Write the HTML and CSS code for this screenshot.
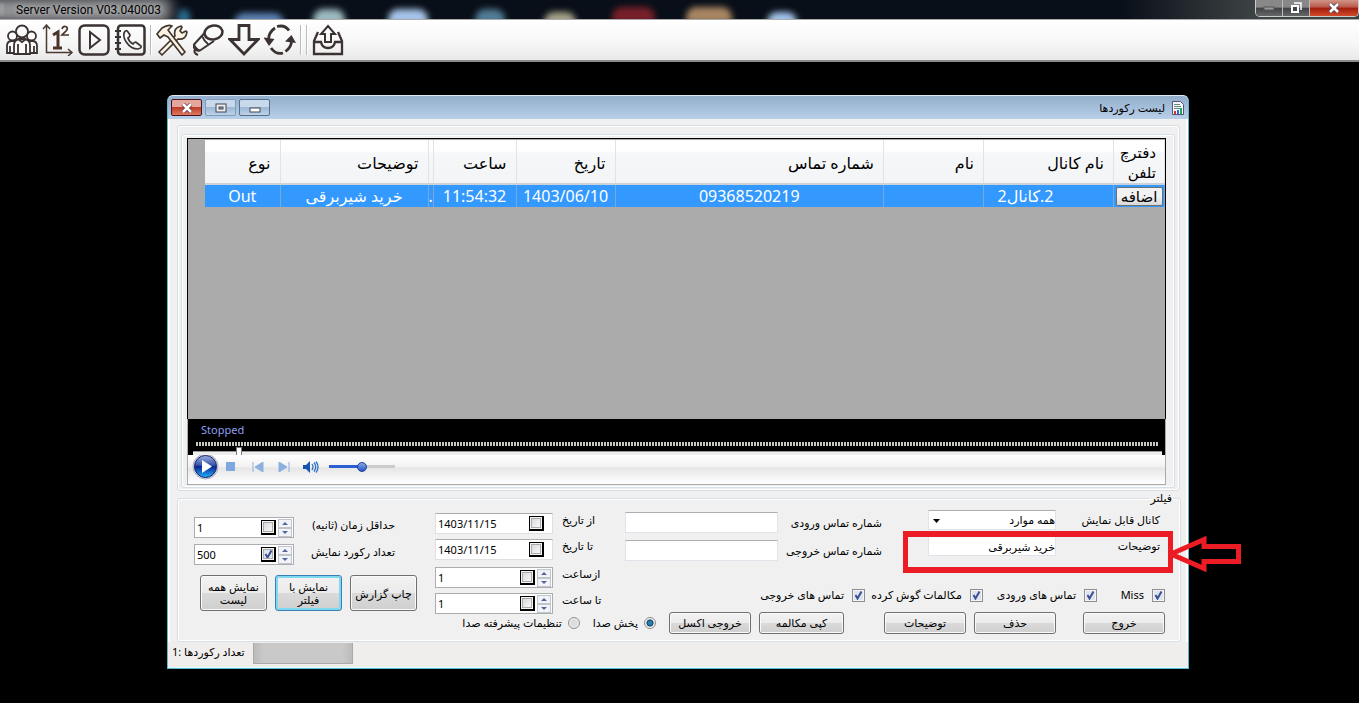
FILE: index.html
```html
<!DOCTYPE html>
<html lang="fa">
<head>
<meta charset="utf-8">
<title>Server Version V03.040003</title>
<link rel="stylesheet" href="styles.css">
</head>
<body>
<header class="appbar">
  <span class="appicon"></span>
  <h1 class="apptitle">Server Version V03.040003</h1>
  <div class="blurs"><i class="b1"></i><i class="b2"></i><i class="b3"></i><i class="b4"></i><i class="b5"></i><i class="b6"></i><i class="b7"></i><i class="b8"></i><i class="b9"></i></div>
  <div class="syscmds">
    <button class="sys" aria-label="Minimize"><svg width="12" height="5"><rect x="1" y="1" width="10" height="3" fill="#999" stroke="#555"/></svg></button>
    <button class="sys" aria-label="Restore"><svg width="12" height="12"><path d="M4 1h7v7" fill="none" stroke="#fff" stroke-width="1.5"/><rect x="2" y="4" width="6" height="6" fill="#444" stroke="#fff" stroke-width="2"/></svg></button>
    <button class="sys sysclose" aria-label="Close"><svg width="12" height="10"><path d="M2 1l8 8M10 1l-8 8" stroke="#445" stroke-width="4"/><path d="M2 1l8 8M10 1l-8 8" stroke="#fff" stroke-width="2.5"/></svg></button>
  </div>
</header>
<nav class="toolbar">
  <button class="tool" aria-label="Users"><svg viewBox="0 0 32 32"><g fill="#fafafa" stroke="#3b3232" stroke-width="1.8"><circle cx="6.500" cy="12" r="4.500"/><circle cx="25.500" cy="12" r="4.500"/><path d="M1 29v-7q0-5 5-5h3v12zM31 29v-7q0-5-5-5h-3v12z"/><path d="M4 22v7M28 22v7"/><path d="M8 30V21q0-5 5-6h6q5 1 5 6v9z"/><circle cx="16" cy="7.500" r="6"/><path d="M12 20v10M20 20v10M12 15l4 3 4-3" fill="none"/></g></svg></button>
  <button class="tool" aria-label="Numbering"><svg viewBox="0 0 32 32"><path d="M4.500 1v27.500H30M1 5l3.500-4L8 5M26 25l4 3.500-4 3.500" fill="none" stroke="#4a3a30" stroke-width="1.500"/><path d="M11 11l5-3v16M11 24h9" fill="none" stroke="#4a3426" stroke-width="3"/><path d="M20 5q1-3 3.500-2.500 3 1 1 4L20 11h7" fill="none" stroke="#4a3426" stroke-width="1.700"/></svg></button>
  <button class="tool" aria-label="Play"><svg viewBox="0 0 32 32"><rect x="1.500" y="1.500" width="29" height="29" rx="5" fill="none" stroke="#3b3232" stroke-width="2.500"/><path d="M12 8l10 8-10 8z" fill="none" stroke="#3b3232" stroke-width="2"/></svg></button>
  <button class="tool" aria-label="Phone book"><svg viewBox="0 0 32 32"><rect x="4" y="1.500" width="26.500" height="29" rx="3" fill="none" stroke="#3b3232" stroke-width="2.500"/><path d="M1 7h6M1 13h6M1 19h6M1 25h6" stroke="#3b3232" stroke-width="2"/><path d="M10 9q2-4 4-1l2 3q0 2-2 3 1 4 5 6 2-3 4-1l4 3q1 2-3 3-7 0-11-6-4-5-3-10z" fill="none" stroke="#3b3232" stroke-width="1.700"/></svg></button>
  <span class="sep"></span>
  <button class="tool" aria-label="Tools"><svg viewBox="0 0 32 32"><g fill="#fdf3e4" stroke="#40362e" stroke-width="1.700" stroke-linejoin="round"><path d="M19 12q-2-8 6-10l1 1-2 4 2 2 4-2 1 1q-1 8-9 7L6 31l-3-3z"/><path d="M1 10l5-6q6-4 10-2l-4 4 3 4 14 18-3 3-14-18-4-2-4 3z"/></g></svg></button>
  <button class="tool" aria-label="Record"><svg viewBox="0 0 32 32"><g fill="none" stroke="#3b3232" stroke-width="2"><path d="M12.500 9L2 20.500q2 5 6 6L22 17M10 12q2 5 6 8M2 20.500v3q2 4 6 3M3 25q-2 4 3 6"/><ellipse cx="21.500" cy="8.500" rx="9" ry="7" transform="rotate(-12 21.500 8.500)" stroke-width="2.500"/></g></svg></button>
  <button class="tool" aria-label="Download"><svg viewBox="0 0 32 32"><path d="M11 1.500h10v14h9L16 30 2 15.500h9z" fill="none" stroke="#3b3232" stroke-width="2.800"/></svg></button>
  <button class="tool" aria-label="Refresh"><svg viewBox="0 0 32 32"><path d="M4.500 15Q5 8 11 4M13 2.500q8-2 12 4M27.500 17q0 6-6 10.500M19 29q-7 2-12-5" fill="none" stroke="#3b3232" stroke-width="2.800"/><path d="M-.5 13.500L10.500 15 5 22zM32 19l-11-1.500L27.500 11z" fill="#3b3232"/></svg></button>
  <span class="sep"></span><span class="sep sep2"></span>
  <button class="tool" aria-label="Export"><svg viewBox="0 0 32 32"><path d="M6 8L2 17v13h28V17L26 8M2 18h7q1 6 7 6t7-6h7" fill="none" stroke="#3b3232" stroke-width="2.300"/><path d="M13 18v-8H9l7-8 7 8h-4v8z" fill="none" stroke="#3b3232" stroke-width="2"/></svg></button>
</nav>
<main class="desktop">
<section class="window">
  <header class="titlebar">
    <button class="wb wclose" aria-label="بستن"><svg width="12" height="10"><path d="M2 1l8 8M10 1l-8 8" stroke="#634" stroke-width="4"/><path d="M2 1l8 8M10 1l-8 8" stroke="#fff" stroke-width="2.500"/></svg></button>
    <button class="wb wmax" aria-label="بزرگ"><svg width="12" height="10"><rect x="1" y="1" width="10" height="8" fill="#eee" stroke="#445" /><rect x="4" y="4" width="4" height="2" fill="#9ab" stroke="#445"/></svg></button>
    <button class="wb" aria-label="کوچک"><svg width="12" height="10"><rect x="1" y="5" width="10" height="4" fill="#fff" stroke="#445"/></svg></button>
    <h2 class="wtitle">لیست رکوردها</h2>
    <svg width="12" height="14"><path d="M.5.500h8l3 3v10H.5z" fill="#f5faff" stroke="#557"/><path d="M2 3.500h6M2 5.500h7M2 7.500h7" stroke="#687"/><path d="M3 10v3" stroke="#c33" stroke-width="2"/><path d="M6 9v4" stroke="#36c" stroke-width="2"/><path d="M9 7v6" stroke="#2a5" stroke-width="2"/></svg>
  </header>
  <div class="content">
    <div class="frame"><div class="frame inner">
      <div class="gridbox">
        <table class="records">
          <colgroup><col class="c-type"><col class="c-desc"><col class="c-dot"><col class="c-time"><col class="c-date"><col><col class="c-name"><col class="c-chan"><col class="c-book"></colgroup>
          <thead><tr><th>نوع</th><th>توضیحات</th><th></th><th>ساعت</th><th>تاریخ</th><th>شماره تماس</th><th>نام</th><th>نام کانال</th><th>دفترچ<br>تلفن</th></tr></thead>
          <tbody><tr><td>Out</td><td>خرید شیربرقی</td><td>.</td><td>11:54:32</td><td>1403/06/10</td><td>09368520219</td><td></td><td class="chan" dir="rtl">2.کانال2</td><td><button class="add">اضافه</button></td></tr></tbody>
        </table>
      </div>
      <div class="player">
        <div class="screen"><span class="state">Stopped</span><div class="ticks"></div><div class="seek"><i class="thumb"></i></div></div>
        <div class="controls">
          <button class="pb" aria-label="Play"><svg width="27" height="27"><defs><linearGradient id="g" x2="0" y2="1"><stop offset="0" stop-color="#9fb2e4"/><stop offset=".45" stop-color="#3450a8"/><stop offset=".5" stop-color="#0b2390"/><stop offset="1" stop-color="#20b4ff"/></linearGradient></defs><circle cx="13.500" cy="13.500" r="12.500" fill="#ddd" stroke="#a8b0c4"/><circle cx="13.500" cy="13.500" r="11" fill="url(#g)" stroke="#17226b"/><path d="M10 7l10 6.500L10 20z" fill="#fff"/></svg></button>
          <button class="pb stop" aria-label="Stop"><svg width="9" height="9"><rect width="9" height="9" fill="#7fa8de"/></svg></button>
          <button class="pb prev" aria-label="Previous"><svg width="12" height="10"><path d="M1 0v10M11 0v10L3 5z" fill="#8cb0df" stroke="#8cb0df"/></svg></button>
          <button class="pb next" aria-label="Next"><svg width="12" height="10"><path d="M11 0v10M1 0v10l8-5z" fill="#8cb0df" stroke="#8cb0df"/></svg></button>
          <button class="pb vol" aria-label="Volume"><svg width="16" height="12"><path d="M0 4h3l4-4v12L3 8H0z" fill="#1556b4"/><path d="M9 3q2 3 0 6M11 1.500q3.500 4.500 0 9M13 .5q4 5.500 0 11" fill="none" stroke="#2b70c8" stroke-width="1.300"/></svg></button>
          <input class="volume" type="range" value="50" aria-label="Volume level">
        </div>
      </div>
    </div></div>
    <fieldset class="filter" dir="rtl">
      <legend>فیلتر</legend>
      <div class="cols" dir="ltr">
        <div class="left">
          <div class="field"><span class="spin"><input id="mn" value="1"><input type="checkbox" class="ck boxed" aria-label="فعال"><span class="ud"><button aria-label="+"></button><button aria-label="-"></button></span></span><label for="mn">حداقل زمان (ثانیه)</label></div>
          <div class="field"><span class="spin"><input id="cn" value="500"><input type="checkbox" class="ck boxed" checked aria-label="فعال"><span class="ud"><button aria-label="+"></button><button aria-label="-"></button></span></span><label for="cn">تعداد رکورد نمایش</label></div>
          <div class="bigs"><button class="btn big">نمایش همه<br>لیست</button><button class="btn big focus">نمایش با<br>فیلتر</button><button class="btn big">چاپ گزارش</button></div>
        </div>
        <div class="right">
          <div class="upper">
            <div class="mid">
              <div class="field"><span class="spin date"><input id="d1" value="1403/11/15"><input type="checkbox" class="ck boxed" aria-label="فعال"></span><label for="d1">از تاریخ</label></div>
              <div class="field"><span class="spin date"><input id="d2" value="1403/11/15"><input type="checkbox" class="ck boxed" aria-label="فعال"></span><label for="d2">تا تاریخ</label></div>
              <div class="field hours"><span class="spin"><input id="h1" value="1"><input type="checkbox" class="ck boxed" aria-label="فعال"><span class="ud"><button aria-label="+"></button><button aria-label="-"></button></span></span><label for="h1">ازساعت</label></div>
              <div class="field"><span class="spin"><input id="h2" value="1"><input type="checkbox" class="ck boxed" aria-label="فعال"><span class="ud"><button aria-label="+"></button><button aria-label="-"></button></span></span><label for="h2">تا ساعت</label></div>
            </div>
            <div class="search">
              <div class="pairs">
                <div class="phones">
                  <div class="prow"><input class="text" id="pi"><label for="pi">شماره تماس ورودی</label></div>
                  <div class="prow"><input class="text" id="po"><label for="po">شماره تماس خروجی</label></div>
                </div>
                <div class="chans">
                  <div class="prow"><select class="text sel" id="ch" dir="rtl"><option>همه موارد</option></select><label for="ch">کانال قابل نمایش</label></div>
                  <div class="prow"><input class="text" id="ds" dir="rtl" value="خرید شیربرقی"><label for="ds">توضیحات</label></div>
                </div>
              </div>
              <div class="checks" dir="rtl">
                <label class="k1"><input type="checkbox" class="ck" checked>Miss</label>
                <label class="k2"><input type="checkbox" class="ck" checked>تماس های ورودی</label>
                <label class="k3"><input type="checkbox" class="ck" checked>مکالمات گوش کرده</label>
                <label><input type="checkbox" class="ck" checked>تماس های خروجی</label>
              </div>
            </div>
          </div>
          <div class="actions" dir="rtl">
            <button class="btn">خروج</button><button class="btn a2">حذف</button><button class="btn a3">توضیحات</button><button class="btn a4">کپی مکالمه</button><button class="btn a3">خروجی اکسل</button>
            <label class="r1"><input type="radio" name="snd" class="rd" checked>پخش صدا</label>
            <label class="r2"><input type="radio" name="snd" class="rd">تنظیمات پیشرفته صدا</label>
          </div>
        </div>
      </div>
    </fieldset>
  </div>
  <footer class="status"><span dir="rtl">تعداد رکوردها :1</span><div class="progress"></div></footer>
  <div class="highlight"></div>
  <svg class="arrow" width="74" height="38"><path d="M3 19L36 4.500V11.500h34.500v15H36V33.500z" fill="none" stroke="#ec1c24" stroke-width="5"/></svg>
</section>
</main>
</body>
</html>
```
FILE: styles.css
```css
* { box-sizing: border-box; }
body { margin: 0; min-height: 100vh; display: flex; flex-direction: column; background: #000; color: #000; font: 11px/14px "Noto Sans", "DejaVu Sans", sans-serif; }
button, input, select { font: inherit; color: inherit; margin: 0; }
button { padding: 0; }
h1, h2 { margin: 0; font-weight: normal; }
.appbar { height: 20px; position: relative; display: flex; align-items: center; overflow: hidden; background: linear-gradient(90deg, transparent 1120px, #3d4244 1255px), #090f18; border-bottom: 1px solid #aaa; }
.appicon { width: 4px; height: 13px; background: linear-gradient(#245, #9cc, #234); margin-right: 12px; z-index: 1; }
.apptitle { z-index: 1; font-family: Roboto, sans-serif; font-size: 12px; line-height: 16px; color: #000; padding-right: 8px; text-shadow: 0 0 5px #ccc; }
.apptitle::before { content: ""; position: absolute; z-index: -1; left: -20px; top: -2px; width: 190px; height: 24px; background: #9b9b9d; filter: blur(7px); }
.blurs i { position: absolute; top: 9px; width: 40px; height: 16px; border-radius: 10px 10px 0 0; filter: blur(3px); background: #a8c8ec; }
.blurs .b1 { left: 178px; width: 12px; background: #2a6b8c; }
.blurs .b2 { left: 234px; width: 50px; background: #5c83b4; top: 13px; }
.blurs .b3 { left: 313px; width: 32px; background: #9cbac0; }
.blurs .b4 { left: 388px; background: #a6c4e8; }
.blurs .b5 { left: 475px; width: 30px; background: #527c96; }
.blurs .b6 { left: 544px; width: 32px; background: #a6a388; top: 12px; }
.blurs .b7 { left: 612px; width: 43px; background: #78202a; top: 7px; }
.blurs .b8 { left: 686px; width: 46px; background: #a98662; top: 7px; }
.blurs .b9 { left: 767px; width: 30px; background: #a4c4ec; top: 12px; }
.syscmds { margin-left: auto; display: flex; align-self: flex-start; height: 17px; border: 1px solid #ccc; border-top: 0; border-radius: 0 0 5px 5px; overflow: hidden; }
.sys { width: 27px; border: 0; border-right: 1px solid #bbb; background: linear-gradient(#888 0 45%, #3e4347 50%, #666); display: grid; place-items: center; }
.sysclose { width: 48px; border: 0; background: linear-gradient(#d09588 0, #b9584a 45%, #a01c0c 50%, #d44a2c); }
.toolbar { height: 42px; display: flex; align-items: center; gap: 4px; padding: 0 6px; background: linear-gradient(#fff, #f6f6f6 60%, #e9e9e9); border-bottom: 2px solid #8b8b8b; }
.tool { width: 32px; height: 32px; border: 0; background: none; }
.tool svg { display: block; width: 32px; height: 32px; }
.sep { width: 2px; height: 30px; border-left: 1px solid #bbb; background: #fff; }
.desktop { flex: 1; padding: 33px 170px 34px 167px; display: flex; }
.window { flex: 1; position: relative; display: flex; flex-direction: column; background: #f0f0f0; border: 1px solid #58b8cf; border-top-color: #dceaf8; border-radius: 6px 6px 0 0; }
.titlebar { height: 23px; display: flex; align-items: center; gap: 3px; padding: 0 4px 0 3px; background: linear-gradient(#93aecb, #b8cfe8); border-radius: 5px 5px 0 0; }
.wb { width: 31px; height: 17px; border: 1px solid #566d8c; border-radius: 2px; display: grid; place-items: center; background: linear-gradient(#c7d9eb 45%, #9db9d5 50%, #bcd2e8); }
.wmax { border-color: #7e9cbd; }
.wclose { border-color: #4a1520; background: linear-gradient(#e5a69c 45%, #c03c25 50%, #dc7c60); }
.wtitle { margin-left: auto; margin-right: 2px; font-size: 11px; }
.titlebar > svg { margin-left: 2px; }
.content { flex: 1; display: flex; flex-direction: column; padding: 6px 5px 0 7px; border: 2px solid #fff; border-width: 0 2px; }
.frame { flex: 1; display: flex; flex-direction: column; border: 1px solid #d5dfe5; border-radius: 3px; box-shadow: inset 0 0 0 1px #fff; padding: 8px 4px 2px 3px; margin-right: 1px; }
.inner { padding: 3px 8px 2px 5px; margin: 0; }
.gridbox { flex: 1; background: #ababab; border: 1px solid #000; border-bottom: 0; padding: 1px 0 0 17px; min-height: 100px; }
.records { width: 100%; table-layout: fixed; border-collapse: collapse; font-size: 16px; line-height: 18px; }
.c-type { width: 75px; } .c-desc { width: 148px; } .c-dot { width: 5px; } .c-time { width: 83px; } .c-date { width: 99px; } .c-name { width: 100px; } .c-chan { width: 130px; } .c-book { width: 51px; }
.records th { height: 44px; padding: 2px 9px 0 0; font-weight: normal; text-align: right; background: linear-gradient(#fff 25%, #f6f7f9 30%, #f3f4f6); border-right: 1px solid #e0e3e8; border-bottom: 2px solid #ccd3d8; overflow: hidden; white-space: nowrap; }
.records th:last-child { padding-right: 8px; padding-top: 0; font-size: 15px; line-height: 20px; }
.records td { height: 23px; padding: 0; text-align: center; color: #fff; background: #3399ff; border-right: 1px solid #7aa8d6; overflow: hidden; white-space: nowrap; }
.records th:nth-child(3), .records td:nth-child(3) { padding: 0; }
.records .chan { padding-right: 46px; }
.add { display: block; width: 47px; height: 19px; margin: 0 auto; overflow: hidden; font-size: 15px; line-height: 16px; color: #000; border: 1px solid #707070; border-radius: 2px; background: linear-gradient(#f2f2f2 50%, #d8d8d8); }
.player { border: 1px solid #aaa; border-top: 0; }
.screen { height: 36px; background: #000; padding: 4px 6px 0 8px; display: flex; flex-direction: column; }
.state { color: #8f9ff2; padding-left: 5px; }
.ticks { height: 4px; margin-top: 5px; background: repeating-linear-gradient(90deg, #c8c8c0 0 2px, #000 2px 3px); }
.seek { height: 4px; margin: 5px -3px 0; background: #eee; border-top: 1px solid #999; position: relative; }
.thumb { position: absolute; left: 43px; top: -5px; width: 6px; height: 8px; background: #fff; border: 1px solid #777; border-bottom: 0; }
.controls { height: 29px; display: flex; align-items: center; padding: 0 4px 6px; background: linear-gradient(#fff, #f2f2f2 40%, #e6e6e6 45%, #fff); }
.pb { border: 0; background: none; display: grid; place-items: center; }
.stop { margin-left: 7px; } .prev { margin-left: 17px; } .next { margin-left: 14px; } .vol { margin-left: 13px; }
.volume { appearance: none; width: 66px; height: 12px; margin-left: 10px; background: linear-gradient(90deg, #2b5ed0 50%, #ccc 50%) center / 100% 3px no-repeat; }
.volume::-webkit-slider-thumb { appearance: none; width: 10px; height: 10px; border-radius: 5px; border: 1px solid #1c3f9a; background: linear-gradient(#8ba6e0, #2458c8); }
.filter { margin: 0; padding: 4px 15px 7px 16px; border: 1px solid #d5dfe5; border-radius: 3px; box-shadow: inset 0 0 0 1px #fff; min-width: 0; }
.filter legend { padding: 0 1px; margin-right: -8px; height: 14px; }
.cols { display: flex; gap: 20px; }
.left { width: 221px; display: flex; flex-direction: column; gap: 6px; padding-top: 8px; }
.field { display: flex; align-items: flex-start; }
.hours { margin-top: 2px; }
.left .field { justify-content: space-between; padding-right: 20px; }
.left .field label { padding-top: 1px; }
.spin { width: 100px; height: 21px; display: flex; align-items: center; background: #fff; border: 1px solid #abadb3; padding: 0 1px 0 2px; flex: none; }
.spin input:first-child { flex: 1; min-width: 0; border: 0; background: none; padding: 0; outline: 0; }
.ck { appearance: none; flex: none; width: 13px; height: 13px; background: linear-gradient(135deg, #d0d2d8, #fff); border: 1px solid #8e8f8f; box-shadow: inset 0 0 0 1px #f4f4f4; }
.ck:checked { background: url("data:image/svg+xml,%3Csvg xmlns='http://www.w3.org/2000/svg' viewBox='0 0 11 11'%3E%3Cpath d='M2.5 5l2 3.500L8.500 1.500' fill='none' stroke='%233a4f94' stroke-width='2'/%3E%3C/svg%3E") center / 11px no-repeat, #dfe3ee; }
.boxed { width: 15px; height: 15px; border: 1px solid #000; border-width: 1px 2px 2px 1px; box-shadow: inset 0 0 0 1px #f4f4f4, inset 0 0 0 2px #aaa; }
.ud { display: flex; flex-direction: column; margin-left: 2px; width: 14px; }
.ud button { height: 9px; border: 1px solid #c0c4cc; background: #f2f3f6; display: grid; place-items: center; }
.ud button::before { content: ""; border: 3px solid transparent; border-top: 0; border-bottom: 3px solid #5565a0; }
.ud button:last-child::before { border-bottom: 0; border-top: 3px solid #5565a0; }
.bigs { display: flex; gap: 8px; margin: 4px 0 0 6px; }
.btn { height: 22px; width: 82px; border: 1px solid #707070; border-radius: 3px; background: linear-gradient(#f2f2f2 0, #ebebeb 49%, #dadada 51%, #cfcfcf); box-shadow: inset 0 0 0 1px #fafafa; white-space: nowrap; }
.big { width: 67px; height: 36px; line-height: 13px; flex: none; }
.focus { border-color: #3c7fb1; box-shadow: inset 0 0 0 2px #7fd8f2; }
.right { flex: 1; min-width: 0; display: flex; flex-direction: column; }
.upper { display: flex; }
.mid { width: 190px; display: flex; flex-direction: column; gap: 5px; padding-top: 4px; }
.mid .spin { width: 118px; margin-right: 9px; }
.mid .date { padding-right: 8px; border-color: #e0e0e0; border-top-color: #abadb3; }
.search { flex: 1; display: flex; flex-direction: column; justify-content: space-between; }
.pairs { display: flex; justify-content: space-between; }
.phones { width: 257px; display: flex; flex-direction: column; gap: 7px; padding-top: 3px; }
.chans { width: 232px; display: flex; flex-direction: column; gap: 6px; margin-right: 5px; padding-top: 1px; }
.prow { display: flex; justify-content: space-between; align-items: center; }
.text { width: 153px; height: 21px; background: #fff; border: 1px solid #e2e3ea; border-top-color: #abadb3; padding: 0 2px; outline: 0; }
.chans .text { width: 128px; height: 20px; padding: 0; }
.sel { appearance: none; background: url("data:image/svg+xml,%3Csvg xmlns='http://www.w3.org/2000/svg' width='7' height='4'%3E%3Cpath d='M0 0h7L3.500 4z'/%3E%3C/svg%3E") 4px 8px no-repeat #fff; }
.checks { display: flex; align-items: center; height: 16px; white-space: nowrap; margin-bottom: 11px; }
.checks label { display: flex; align-items: center; gap: 8px; }
.k1 { width: 68px; } .k2 { width: 114px; } .k3 { width: 118px; }
.actions { display: flex; align-items: center; white-space: nowrap; margin-top: -2px; }
.actions .btn { flex: none; }
.actions .a2 { margin-right: 27px; } .actions .a3 { margin-right: 8px; } .actions .a4 { width: 85px; margin-right: 40px; }
.actions label { display: flex; align-items: center; gap: 6px; margin-right: 13px; }
.rd { appearance: none; width: 12px; height: 12px; border-radius: 6px; border: 1px solid #8e8f8f; background: radial-gradient(#ddd 40%, #fff); }
.rd:checked { background: radial-gradient(#2d7fae 25%, #123d62 45%, #eee 55%); }
.status { height: 26px; display: flex; gap: 8px; padding: 1px 4px; background: #f0eeed; line-height: 18px; border-bottom: 1px solid #dff; }
.progress { width: 100px; height: 21px; border: 1px solid #aaa; border-top: 0; background: linear-gradient(90deg, #bbb, #c9c9c9 10% 90%, #bbb); }
.highlight { position: absolute; right: 15px; bottom: 95px; width: 270px; height: 42px; border: 5px solid #ec1c24; border-top-width: 6px; border-bottom-width: 6px; pointer-events: none; }
.arrow { position: absolute; right: -54px; bottom: 95px; }
```
